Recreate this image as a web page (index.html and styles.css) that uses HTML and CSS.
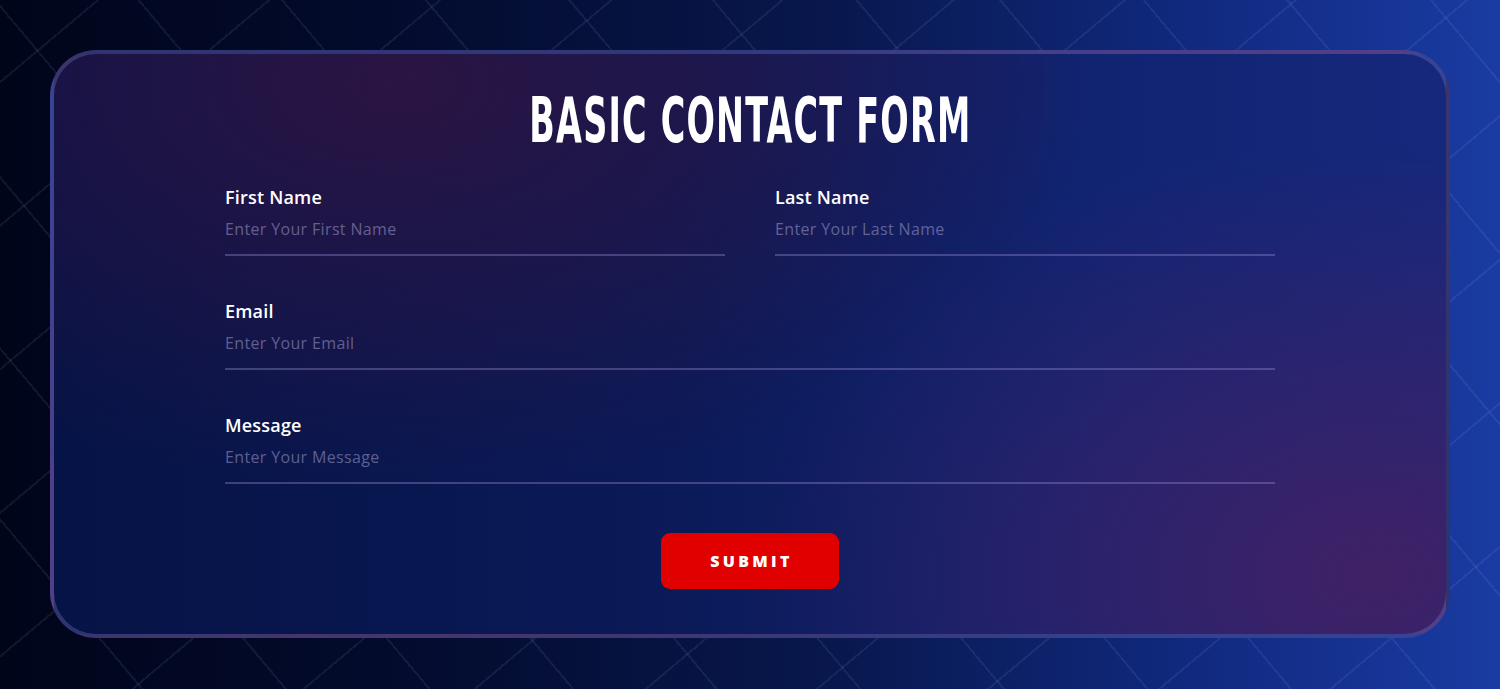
FILE: index.html
```html
<!DOCTYPE html>
<html lang="en">
<head>
<meta charset="utf-8">
<title>Basic Contact Form</title>
<link rel="stylesheet" href="styles.css">
</head>
<body>
<main class="page">
  <form class="card" onsubmit="return false">
    <h1 class="title"><span class="title-text">BASIC CONTACT FORM</span></h1>
    <div class="fields">
      <div class="row">
        <div class="field">
          <label class="label" for="fn">First Name</label>
          <input class="input" id="fn" type="text" placeholder="Enter Your First Name">
        </div>
        <div class="field">
          <label class="label" for="ln">Last Name</label>
          <input class="input" id="ln" type="text" placeholder="Enter Your Last Name">
        </div>
      </div>
      <div class="row">
        <div class="field">
          <label class="label" for="em">Email</label>
          <input class="input" id="em" type="email" placeholder="Enter Your Email">
        </div>
      </div>
      <div class="row">
        <div class="field">
          <label class="label" for="ms">Message</label>
          <input class="input" id="ms" type="text" placeholder="Enter Your Message">
        </div>
      </div>
    </div>
    <div class="actions">
      <button class="submit" type="submit">SUBMIT</button>
    </div>
  </form>
</main>
</body>
</html>
```
FILE: styles.css
```css
* { box-sizing: border-box; }
html, body { margin: 0; padding: 0; }
body {
  height: 689px;
  overflow: hidden;
  font-family: "Open Sans", "Liberation Sans", sans-serif;
  background-color: #020820;
  background-image:
    repeating-linear-gradient(50deg, transparent 0 108px, rgba(170,190,255,0.09) 108px 110px),
    repeating-linear-gradient(-40deg, transparent 0 108px, rgba(170,190,255,0.09) 108px 110px),
    linear-gradient(to right, #01051a 0%, #030b2c 25%, #08174c 55%, #112a80 80%, #1a3ba2 100%);
}
.page {
  padding: 50px;
}
.card {
  border: 4px solid rgba(130,125,200,0.32);
  border-radius: 46px;
  padding: 35px 0 45px;
  display: flex;
  flex-direction: column;
  align-items: center;
  background-image:
    radial-gradient(ellipse 50% 70% at 25% 5%, rgba(44,20,66,0.95), rgba(44,20,66,0) 100%),
    radial-gradient(ellipse 45% 75% at 95% 90%, rgba(64,33,102,1), rgba(64,33,102,0) 100%),
    linear-gradient(to right, #061346 0%, #0b1a58 45%, #112472 75%, #15287c 100%);
}
.title {
  margin: 0 0 32px;
  height: 63px;
  line-height: 63px;
  text-align: center;
  font-family: "DejaVu Sans Condensed", "DejaVu Sans", sans-serif;
  font-stretch: condensed;
  font-weight: 700;
  font-size: 62px;
  color: #ffffff;
  width: 100%;
}
.title-text {
  display: inline-block;
  transform: scaleX(0.6);
  letter-spacing: 2px;
  white-space: nowrap;
}
.fields {
  width: 1050px;
  display: flex;
  flex-direction: column;
  gap: 42px;
}
.row {
  display: flex;
  gap: 50px;
}
.field {
  flex: 1;
  display: flex;
  flex-direction: column;
}
.label {
  font-size: 18px;
  line-height: 27px;
  font-weight: 600;
  letter-spacing: 0.2px;
  color: #ffffff;
}
.input {
  font-family: "Open Sans", "Liberation Sans", sans-serif;
  font-size: 16px;
  letter-spacing: 0.35px;
  line-height: 23px;
  height: 45px;
  padding: 6px 0 14px;
  margin: 0;
  border: 0;
  border-bottom: 2px solid rgba(150,140,210,0.38);
  background: transparent;
  color: #ffffff;
  outline: none;
}
.input::placeholder {
  color: rgba(175,170,215,0.5);
}
.actions {
  margin-top: 49px;
  display: flex;
  justify-content: center;
}
.submit {
  width: 178px;
  height: 56px;
  border: 0;
  border-radius: 9px;
  background: #e00000;
  color: #ffffff;
  font-family: "Open Sans", "Liberation Sans", sans-serif;
  font-weight: 800;
  font-size: 16px;
  letter-spacing: 3.3px;
  padding: 0 0 0 3px;
  cursor: pointer;
}
```
